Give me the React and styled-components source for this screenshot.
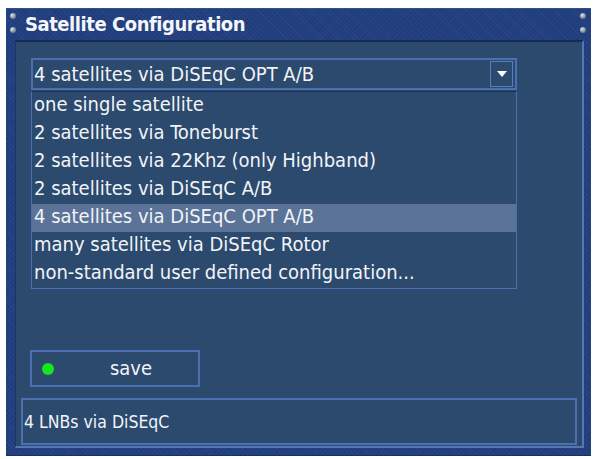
import React from "react";
import styled, { createGlobalStyle } from "styled-components";

const options = [
  "one single satellite",
  "2 satellites via Toneburst",
  "2 satellites via 22Khz (only Highband)",
  "2 satellites via DiSEqC A/B",
  "4 satellites via DiSEqC OPT A/B",
  "many satellites via DiSEqC Rotor",
  "non-standard user defined configuration...",
];

const selected = 4;

const GlobalStyle = createGlobalStyle`
  body {
    margin: 0;
    background: #ffffff;
    font-family: "DejaVu Sans Condensed", "DejaVu Sans", sans-serif;
  }
`;

const Window = styled.div`
  margin: 8px 0 0 6px;
  width: 585px;
  height: 448px;
  box-sizing: border-box;
  display: flex;
  flex-direction: column;
  background-color: #213f7f;
  background-image:
    repeating-linear-gradient(45deg, rgba(255, 255, 255, 0.035) 0 1px, transparent 1px 3px),
    repeating-linear-gradient(-45deg, rgba(0, 0, 0, 0.06) 0 1px, transparent 1px 4px);
  border-top: 1px solid #2f4f92;
  border-bottom: 1px solid #15306a;
`;

const TitleBar = styled.div`
  height: 31px;
  display: flex;
  align-items: center;
  padding: 0 4px 0 3px;
`;

const Rivets = styled.div`
  width: 8px;
  display: flex;
  flex-direction: column;
  align-items: center;
  gap: 8px;
  margin-top: -3px;
`;

const Rivet = styled.span`
  width: 6px;
  height: 6px;
  border-radius: 50%;
  background: radial-gradient(circle at 35% 35%, #dfe4ec, #8590a6 55%, #45516d);
`;

const Title = styled.h1`
  flex: 1;
  margin: -1px 0 0 8px;
  font-size: 20px;
  font-weight: bold;
  color: #f4f6fa;
  letter-spacing: -0.45px;
`;

const Panel = styled.div`
  flex: 1;
  margin: 0 7px 7px 9px;
  display: flex;
  flex-direction: column;
  background: #2b4a6d;
  border-top: 2px solid #142c5a;
  border-left: 1px solid #1b3566;
  border-right: 2px solid #5577b6;
  border-bottom: 2px solid #5577b6;
  padding-top: 16px;
`;

const Combo = styled.div`
  margin-left: 15px;
  width: 486px;
  height: 32px;
  box-sizing: border-box;
  display: flex;
  align-items: center;
  border: 2px solid #4c6fb0;
  padding: 0 2px 0 1px;
  color: #f2f4f8;
  font-size: 20px;
`;

const ComboText = styled.span`
  flex: 1;
`;

const ArrowButton = styled.span`
  width: 23px;
  height: 26px;
  box-sizing: border-box;
  border: 1px solid #5a7cc0;
  display: flex;
  align-items: center;
  justify-content: center;
`;

const List = styled.ul`
  margin: 1px 0 0 15px;
  padding: 0;
  list-style: none;
  width: 486px;
  box-sizing: border-box;
  border: 1px solid #4c6fb0;
  border-top-color: #1a3462;
`;

const Item = styled.li`
  height: 28px;
  box-sizing: border-box;
  padding: 0 0 4px 2px;
  display: flex;
  align-items: center;
  font-size: 20px;
  color: #f2f4f8;
  background: ${(p) => (p.$active ? "#5a7397" : "transparent")};
`;

const SaveButton = styled.div`
  margin: 61px 0 0 14px;
  width: 170px;
  height: 37px;
  box-sizing: border-box;
  border: 2px solid #4c6fb0;
  display: flex;
  align-items: center;
  padding-left: 10px;
`;

const Led = styled.span`
  width: 12px;
  height: 12px;
  border-radius: 50%;
  background: #14e81c;
`;

const SaveLabel = styled.span`
  flex: 1;
  text-align: center;
  padding: 0 0 2px 10px;
  font-size: 20px;
  color: #f2f4f8;
`;

const StatusBar = styled.div`
  margin: auto 5px 1px 5px;
  height: 47px;
  box-sizing: border-box;
  border: 2px solid #4c6fb0;
  display: flex;
  align-items: center;
  padding-left: 1px;
  font-size: 17.5px;
  color: #f2f4f8;
`;

export default function App() {
  return (
    <>
      <GlobalStyle />
      <Window>
        <TitleBar>
          <Rivets>
            <Rivet />
            <Rivet />
          </Rivets>
          <Title>Satellite Configuration</Title>
          <Rivets>
            <Rivet />
            <Rivet />
          </Rivets>
        </TitleBar>
        <Panel>
          <Combo>
            <ComboText>{options[selected]}</ComboText>
            <ArrowButton>
              <svg width="10" height="6" viewBox="0 0 10 6">
                <path d="M0 0H10L5 6Z" fill="#ffffff" />
              </svg>
            </ArrowButton>
          </Combo>
          <List>
            {options.map((o, i) => (
              <Item key={o} $active={i === selected}>
                {o}
              </Item>
            ))}
          </List>
          <SaveButton>
            <Led />
            <SaveLabel>save</SaveLabel>
          </SaveButton>
          <StatusBar>4 LNBs via DiSEqC</StatusBar>
        </Panel>
      </Window>
    </>
  );
}
